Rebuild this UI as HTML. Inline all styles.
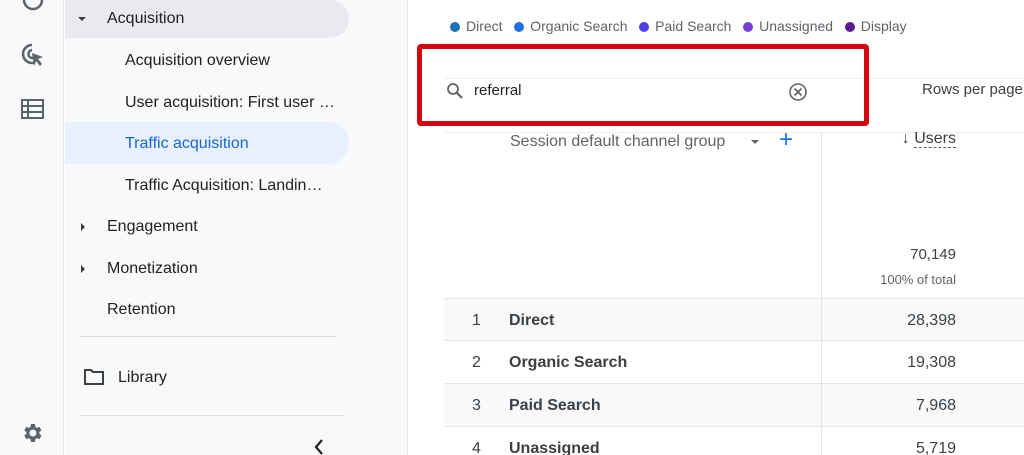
<!DOCTYPE html>
<html><head><style>
*{margin:0;padding:0;box-sizing:border-box}
html,body{overflow:hidden}
body{width:1024px;height:455px;background:#fff;font-family:"Liberation Sans",Arial,sans-serif;position:relative;color:#202124}
.abs{position:absolute}
.rail{left:0;top:0;width:64px;height:455px;background:#f8f9fa;border-right:1px solid #e3e3e3}
.nav{left:65px;top:0;width:343px;height:455px;background:#f8f9fa;border-right:1px solid #e3e3e3}
.t{position:absolute;font-size:16px;white-space:nowrap}
.row{position:absolute;left:444px;width:580px;height:43px;border-bottom:1px solid #e6e6e6}
.row .n{position:absolute;left:28px;top:13px;font-size:16px;color:#3c4043}
.row .c{position:absolute;left:65px;top:13px;font-size:16px;font-weight:bold;color:#3c4043}
.row .v{position:absolute;right:68px;top:13px;font-size:16px;color:#3c4043}
.r{position:absolute;right:68px;white-space:nowrap}
.dot{display:inline-block;width:10px;height:10px;border-radius:50%;margin-right:6px;vertical-align:-1px}
</style></head><body>
<div class="abs rail"></div>
<div class="abs nav"></div>
<svg class="abs" style="left:20px;top:-8px" width="26" height="20" viewBox="0 0 26 20"><circle cx="13" cy="8" r="9" fill="none" stroke="#5f6368" stroke-width="2.5"/></svg>
<svg class="abs" style="left:20px;top:42px" width="26" height="26" viewBox="0 0 26 26"><path d="M12 3a9 9 0 1 0 3 17.5" fill="none" stroke="#5f6368" stroke-width="2.5"/><path d="M12 8a4 4 0 1 0 1 8" fill="none" stroke="#5f6368" stroke-width="2.5"/><path d="M12 11l11 4-5 2 4 5-2 2-4-5-2 5z" fill="#5f6368"/></svg>
<svg class="abs" style="left:21px;top:99px" width="23" height="20" viewBox="0 0 23 20"><rect x="1" y="1" width="21" height="18" fill="none" stroke="#5f6368" stroke-width="2"/><path d="M1 7h21M1 13h21M7 1v18" stroke="#5f6368" stroke-width="2"/></svg>
<svg class="abs" style="left:20px;top:421px" width="24" height="24" viewBox="0 0 24 24"><path fill="#5f6368" d="M19.4 13a7.5 7.5 0 0 0 0-2l2.1-1.6-2-3.5-2.5 1a7 7 0 0 0-1.7-1L14.9 3h-4l-.4 2.9a7 7 0 0 0-1.7 1l-2.5-1-2 3.5L6.4 11a7.5 7.5 0 0 0 0 2l-2.1 1.6 2 3.5 2.5-1a7 7 0 0 0 1.7 1l.4 2.9h4l.4-2.9a7 7 0 0 0 1.7-1l2.5 1 2-3.5zM12.9 15.5a3.5 3.5 0 1 1 0-7 3.5 3.5 0 0 1 0 7z"/></svg>
<div class="abs" style="left:65px;top:0;width:284px;height:38px;background:#e8eaed;border-radius:0 19px 19px 0"></div>
<div class="abs" style="left:65px;top:122px;width:284px;height:42px;background:#e8f0fe;border-radius:0 21px 21px 0"></div>
<div class="abs" style="left:78px;top:17px;width:0;height:0;border-left:4px solid transparent;border-right:4px solid transparent;border-top:4px solid #3c4043"></div>
<div class="t" style="left:107px;top:10px">Acquisition</div>
<div class="t" style="left:125px;top:52px">Acquisition overview</div>
<div class="t" style="left:125px;top:94px">User acquisition: First user …</div>
<div class="t" style="left:125px;top:135px;color:#1967d2">Traffic acquisition</div>
<div class="t" style="left:125px;top:177px">Traffic Acquisition: Landin…</div>
<div class="abs" style="left:81px;top:223px;width:0;height:0;border-top:4px solid transparent;border-bottom:4px solid transparent;border-left:4px solid #3c4043"></div>
<div class="t" style="left:107px;top:218px">Engagement</div>
<div class="abs" style="left:81px;top:265px;width:0;height:0;border-top:4px solid transparent;border-bottom:4px solid transparent;border-left:4px solid #3c4043"></div>
<div class="t" style="left:107px;top:260px">Monetization</div>
<div class="t" style="left:107px;top:301px">Retention</div>
<div class="abs" style="left:80px;top:336px;width:256px;height:1px;background:#dadce0"></div>
<svg class="abs" style="left:84px;top:369px" width="20" height="16" viewBox="0 0 20 16"><path d="M1 1h6l2 2h10v12H1z" fill="none" stroke="#3c4043" stroke-width="2"/></svg>
<div class="t" style="left:118px;top:369px">Library</div>
<div class="abs" style="left:80px;top:415px;width:265px;height:1px;background:#e3e3e3"></div>
<svg class="abs" style="left:313px;top:438px" width="12" height="17" viewBox="0 0 12 17"><path d="M9 2L3 9l6 7" fill="none" stroke="#202124" stroke-width="2.2"/></svg>
<div class="abs" style="left:450px;top:18px;font-size:14px;color:#5f6368;white-space:nowrap">
<span class="dot" style="background:#1a73b8"></span>Direct&nbsp;&nbsp;&nbsp;<span class="dot" style="background:#1e6fe0"></span>Organic Search&nbsp;&nbsp;&nbsp;<span class="dot" style="background:#4f3ee6"></span>Paid Search&nbsp;&nbsp;&nbsp;<span class="dot" style="background:#7b3fd6"></span>Unassigned&nbsp;&nbsp;&nbsp;<span class="dot" style="background:#5d1a8f"></span>Display</div>
<div class="abs" style="left:444px;top:78px;width:580px;height:1px;background:#eee"></div>
<div class="abs" style="left:444px;top:132px;width:580px;height:1px;background:#eee"></div>
<svg class="abs" style="left:446px;top:82px" width="18" height="18" viewBox="0 0 18 18"><circle cx="7" cy="7" r="5" fill="none" stroke="#5f6368" stroke-width="1.8"/><path d="M11 11l5 5" stroke="#5f6368" stroke-width="2"/></svg>
<div class="t" style="left:474px;top:82px;font-size:15px">referral</div>
<svg class="abs" style="left:788px;top:82px" width="20" height="20" viewBox="0 0 20 20"><circle cx="10" cy="10" r="8" fill="none" stroke="#5f6368" stroke-width="1.6"/><path d="M6.5 6.5l7 7M13.5 6.5l-7 7" stroke="#5f6368" stroke-width="1.6"/></svg>
<div class="t" style="left:922px;top:81px;font-size:15px;color:#3c4043">Rows per page</div>
<div class="abs" style="left:417px;top:44px;width:452px;height:82px;border:5px solid #d4070f;border-radius:4px"></div>
<div class="abs" style="left:821px;top:133px;width:1px;height:322px;background:#e3e3e3"></div>
<div class="t" style="left:510px;top:133px;color:#5f6368;font-size:16px">Session default channel group</div>
<div class="abs" style="left:751px;top:140px;border-left:4px solid transparent;border-right:4px solid transparent;border-top:4px solid #5f6368"></div>
<div class="t" style="left:779px;top:126px;color:#1a73e8;font-size:24px">+</div>
<div class="r" style="top:130px;font-size:16px;color:#3c4043">↓ <span style="border-bottom:1px dashed #5f6368">Users</span></div>
<div class="r" style="top:246px;font-size:15px;color:#3c4043">70,149</div>
<div class="r" style="top:272px;font-size:13px;color:#5f6368">100% of total</div>
<div class="row" style="top:298px;background:#f8f9fa;border-top:1px solid #e6e6e6"><span class="n">1</span><span class="c">Direct</span><span class="v">28,398</span></div>
<div class="row" style="top:341px"><span class="n">2</span><span class="c">Organic Search</span><span class="v">19,308</span></div>
<div class="row" style="top:384px;background:#f8f9fa"><span class="n">3</span><span class="c">Paid Search</span><span class="v">7,968</span></div>
<div class="row" style="top:427px;height:28px;border-bottom:none"><span class="n">4</span><span class="c">Unassigned</span><span class="v">5,719</span></div>
<div class="abs" style="left:821px;top:298px;width:1px;height:157px;background:#e3e3e3"></div>
</body></html>
